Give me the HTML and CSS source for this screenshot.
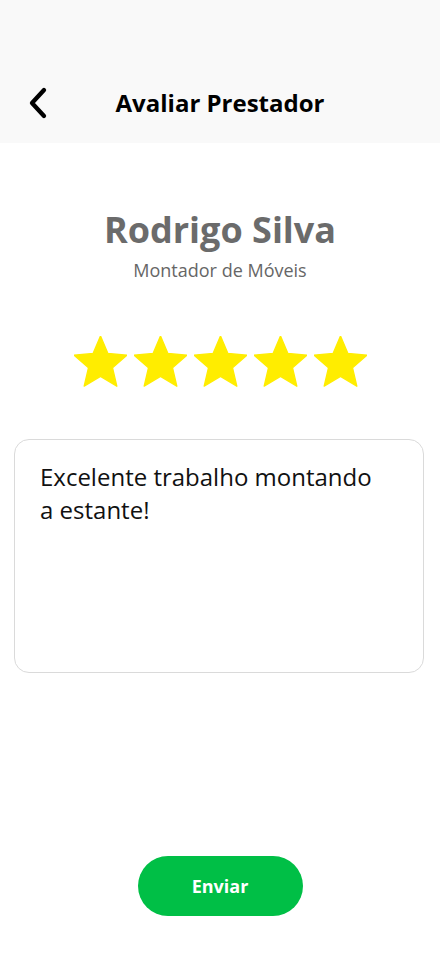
FILE: index.html
```html
<!DOCTYPE html>
<html lang="pt-BR">
<head>
<meta charset="utf-8">
<title>Avaliar Prestador</title>
<link rel="stylesheet" href="styles.css">
</head>
<body>
<div class="screen">
  <header class="header">
    <button class="back" aria-label="Voltar">
      <svg width="20" height="34" viewBox="0 0 20 34"><path d="M16 4 L4 17 L16 30" fill="none" stroke="#000" stroke-width="4.3" stroke-linecap="round" stroke-linejoin="round"/></svg>
    </button>
    <h1 class="title">Avaliar Prestador</h1>
  </header>
  <main class="content">
    <h2 class="name">Rodrigo Silva</h2>
    <p class="role">Montador de Móveis</p>
    <div class="stars">
      <svg class="star" viewBox="2 2 20 19.3"><path d="M12 17.27L18.18 21l-1.64-7.03L22 9.24l-7.19-.61L12 2 9.19 8.63 2 9.24l5.46 4.73L5.82 21z" fill="#ffed00" stroke="#ffed00" stroke-width="0.5" stroke-linejoin="round"/></svg>
      <svg class="star" viewBox="2 2 20 19.3"><path d="M12 17.27L18.18 21l-1.64-7.03L22 9.24l-7.19-.61L12 2 9.19 8.63 2 9.24l5.46 4.73L5.82 21z" fill="#ffed00" stroke="#ffed00" stroke-width="0.5" stroke-linejoin="round"/></svg>
      <svg class="star" viewBox="2 2 20 19.3"><path d="M12 17.27L18.18 21l-1.64-7.03L22 9.24l-7.19-.61L12 2 9.19 8.63 2 9.24l5.46 4.73L5.82 21z" fill="#ffed00" stroke="#ffed00" stroke-width="0.5" stroke-linejoin="round"/></svg>
      <svg class="star" viewBox="2 2 20 19.3"><path d="M12 17.27L18.18 21l-1.64-7.03L22 9.24l-7.19-.61L12 2 9.19 8.63 2 9.24l5.46 4.73L5.82 21z" fill="#ffed00" stroke="#ffed00" stroke-width="0.5" stroke-linejoin="round"/></svg>
      <svg class="star" viewBox="2 2 20 19.3"><path d="M12 17.27L18.18 21l-1.64-7.03L22 9.24l-7.19-.61L12 2 9.19 8.63 2 9.24l5.46 4.73L5.82 21z" fill="#ffed00" stroke="#ffed00" stroke-width="0.5" stroke-linejoin="round"/></svg>
    </div>
    <div class="comment">Excelente trabalho montando a estante!</div>
  </main>
  <footer class="footer">
    <button class="send">Enviar</button>
  </footer>
</div>
</body>
</html>
```
FILE: styles.css
```css
* { box-sizing: border-box; }
html, body { margin: 0; padding: 0; }
body {
  font-family: "Open Sans", "Noto Sans", sans-serif;
  background: #fff;
  color: #000;
}
.screen {
  width: 440px;
  min-height: 956px;
  display: flex;
  flex-direction: column;
}
.header {
  background: #f9f9f9;
  height: 143px;
  padding: 80px 0 0 0;
  display: flex;
  align-items: flex-start;
  position: relative;
}
.back {
  width: 20px;
  height: 46px;
  margin-left: 28px;
  padding: 0;
  border: 0;
  background: none;
  display: flex;
  align-items: center;
  justify-content: center;
}
.back svg { display: block; }
.title {
  position: absolute;
  left: 0;
  right: 0;
  top: 80px;
  margin: 0;
  height: 46px;
  line-height: 46px;
  text-align: center;
  font-size: 24px;
  font-weight: 700;
  pointer-events: none;
}
.content {
  display: flex;
  flex-direction: column;
  align-items: center;
  padding: 62px 0 0;
}
.name {
  margin: 0;
  font-size: 36px;
  line-height: 50px;
  font-weight: 700;
  color: #6b6b6b;
}
.role {
  margin: 3px 0 0;
  font-size: 18px;
  line-height: 24px;
  color: #666;
}
.stars {
  display: flex;
  gap: 7px;
  margin-top: 54px;
}
.star {
  width: 53px;
  height: 51px;
  display: block;
}
.comment {
  align-self: flex-start;
  margin: 52px 0 0 14px;
  width: 410px;
  height: 234px;
  border: 1px solid #dadada;
  border-radius: 15px;
  padding: 20px 40px 0 25px;
  font-size: 24px;
  line-height: 33px;
  color: #111;
}
.footer {
  margin-top: auto;
  display: flex;
  justify-content: center;
  padding-bottom: 40px;
}
.send {
  width: 165px;
  height: 60px;
  border: 0;
  border-radius: 30px;
  background: #00bf46;
  color: #fff;
  font-family: "Open Sans", "Noto Sans", sans-serif;
  font-size: 18px;
  font-weight: 700;
}
```
